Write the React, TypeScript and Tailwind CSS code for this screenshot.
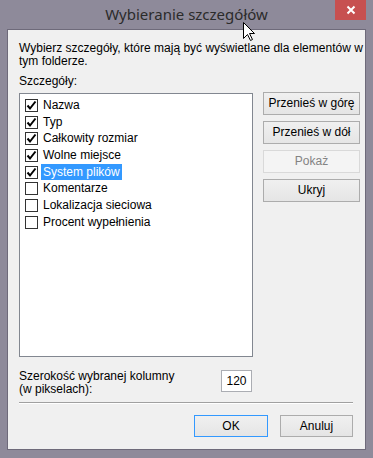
import type { ReactNode } from 'react';

const items = [
	{ label: 'Nazwa', checked: true },
	{ label: 'Typ', checked: true },
	{ label: 'Całkowity rozmiar', checked: true },
	{ label: 'Wolne miejsce', checked: true },
	{ label: 'System plików', checked: true, selected: true },
	{ label: 'Komentarze', checked: false },
	{ label: 'Lokalizacja sieciowa', checked: false },
	{ label: 'Procent wypełnienia', checked: false },
];

const sideButtons = [
	{ label: 'Przenieś w górę' },
	{ label: 'Przenieś w dół' },
	{ label: 'Pokaż', disabled: true },
	{ label: 'Ukryj' },
];

const CheckBox = ({ checked }: { checked: boolean }) => (
	<div className="w-[13px] h-[13px] border border-[#333333] bg-white flex items-center justify-center shrink-0">
		{checked && (
			<svg width="11" height="11" viewBox="0 0 11 11">
				<path d="M1.5 5.5 L4 8.5 L9.5 1.5" fill="none" stroke="#000" strokeWidth="2" />
			</svg>
		)}
	</div>
);

const Button = ({ children, disabled, primary, className }: { children: ReactNode; disabled?: boolean; primary?: boolean; className?: string }) => (
	<div
		className={`flex items-center justify-center border ${
			disabled
				? 'border-[#d9d9d9] bg-[#f4f4f4] text-[#838383]'
				: primary
				? 'border-[#3399ff] bg-gradient-to-b from-[#f0f0f0] to-[#e5e5e5] text-black'
				: 'border-[#acacac] bg-gradient-to-b from-[#f0f0f0] to-[#e5e5e5] text-black'
		} ${className ?? ''}`}
	>
		{children}
	</div>
);

const App = () => {
	return (
		<div className="relative w-[373px] h-[458px] bg-[#8e8a9a] flex flex-col font-['Liberation_Sans',sans-serif] text-[12px] leading-[13px] text-black">
			{/* title bar */}
			<div className="h-[29px] shrink-0 flex items-center justify-center">
				<span className="font-['Noto_Sans',sans-serif] text-[15px] leading-[20px] text-[#2b2b2b] -mt-[1px]">Wybieranie szczegółów</span>
			</div>
			<div className="absolute top-0 right-[7px] w-[31px] h-[20px] bg-[#c75050] flex items-center justify-center">
				<svg width="10" height="10" viewBox="0 0 10 10">
					<path d="M1.5 1.5 L8.5 8.5 M8.5 1.5 L1.5 8.5" stroke="#fff" strokeWidth="2" />
				</svg>
			</div>

			{/* client area */}
			<div className="mx-[7px] mb-[8px] flex-1 border border-[#6e6a7a] bg-[#f0f0f0] flex flex-col pl-[11px]">
				<p className="mt-[12px] w-[346px]">Wybierz szczegóły, które mają być wyświetlane dla elementów w tym folderze.</p>
				<p className="mt-[7px]">Szczegóły:</p>

				<div className="flex mt-[5px] gap-[10px]">
					<div className="w-[234px] h-[264px] border border-[#828790] bg-white pt-[3px] pl-[5px]">
						{items.map(item => (
							<div key={item.label} className="h-[16.7px] flex items-center">
								<CheckBox checked={item.checked} />
								<span
									className={`ml-[3px] px-[2px] h-full flex items-center ${
										item.selected ? 'bg-[#3399ff] text-white' : ''
									}`}
								>
									{item.label}
								</span>
							</div>
						))}
					</div>
					<div className="flex flex-col gap-[6px] -mt-[1px]">
						{sideButtons.map(b => (
							<Button key={b.label} disabled={b.disabled} className="w-[97px] h-[23px]">
								{b.label}
							</Button>
						))}
					</div>
				</div>

				<div className="flex mt-[13px] items-start">
					<p className="w-[202px]">
						Szerokość wybranej kolumny
						<br />
						(w pikselach):
					</p>
					<div className="w-[31px] h-[22px] border border-[#abadb3] bg-white flex items-center justify-center">120</div>
				</div>

				<div className="mt-[6px] w-[334px] border-t border-[#a0a0a0] border-b border-b-white" />

				<div className="w-[334px] flex justify-end gap-[12px] mt-[11px]">
					<Button primary className="w-[74px] h-[22px]">OK</Button>
					<Button className="w-[73px] h-[22px]">Anuluj</Button>
				</div>
			</div>

			{/* mouse pointer */}
			<svg className="absolute left-[243px] top-[22px]" width="13" height="20" viewBox="0 0 13 20">
				<path d="M0.5 0.5 L0.5 16.5 L4.5 12.5 L7.5 18.5 L9.5 17.5 L6.5 11.5 L11.5 11.5 Z" fill="#fff" stroke="#000" strokeWidth="1" />
			</svg>
		</div>
	);
};

export default App;
